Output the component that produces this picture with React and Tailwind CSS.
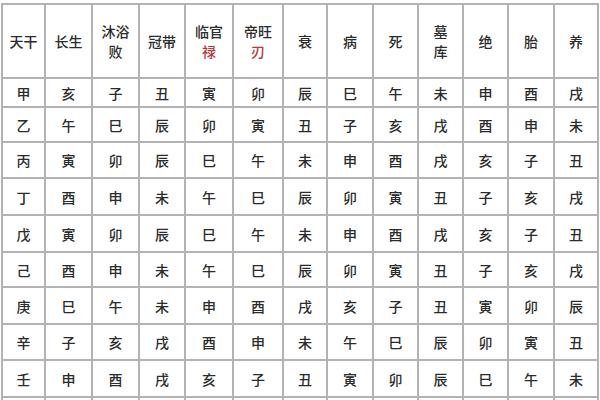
import React from 'react';

const header = [
  ['天干'],
  ['长生'],
  ['沐浴', '败'],
  ['冠带'],
  ['临官', '禄'],
  ['帝旺', '刃'],
  ['衰'],
  ['病'],
  ['死'],
  ['墓', '库'],
  ['绝'],
  ['胎'],
  ['养'],
];

const redSecond = { 4: true, 5: true };

const rows = [
  ['甲', '亥', '子', '丑', '寅', '卯', '辰', '巳', '午', '未', '申', '酉', '戌'],
  ['乙', '午', '巳', '辰', '卯', '寅', '丑', '子', '亥', '戌', '酉', '申', '未'],
  ['丙', '寅', '卯', '辰', '巳', '午', '未', '申', '酉', '戌', '亥', '子', '丑'],
  ['丁', '酉', '申', '未', '午', '巳', '辰', '卯', '寅', '丑', '子', '亥', '戌'],
  ['戊', '寅', '卯', '辰', '巳', '午', '未', '申', '酉', '戌', '亥', '子', '丑'],
  ['己', '酉', '申', '未', '午', '巳', '辰', '卯', '寅', '丑', '子', '亥', '戌'],
  ['庚', '巳', '午', '未', '申', '酉', '戌', '亥', '子', '丑', '寅', '卯', '辰'],
  ['辛', '子', '亥', '戌', '酉', '申', '未', '午', '巳', '辰', '卯', '寅', '丑'],
  ['壬', '申', '酉', '戌', '亥', '子', '丑', '寅', '卯', '辰', '巳', '午', '未'],
];

// row heights measured line to line
const rowHeights = ['h-[29px]', 'h-[35px]', 'h-[36px]', 'h-[37px]', 'h-[37px]', 'h-[35px]', 'h-[37px]', 'h-[36px]', 'h-[37px]'];

const colWidths = [43, 47, 47, 46, 48, 50, 44, 46, 45, 45, 45, 46, 44];

export default function App() {
  return (
    <div
      className="h-[400px] w-[600px] overflow-hidden bg-white pl-px pt-[3px]"
      style={{ fontFamily: '"Noto Sans CJK SC", "Noto Sans", sans-serif' }}
    >
      <table className="w-[598px] table-fixed border-collapse text-[14px] text-[#2b2b2b]">
        <colgroup>
          {colWidths.map((w, i) => (
            <col key={i} style={{ width: w }} />
          ))}
        </colgroup>
        <thead>
          <tr className="h-[74px]">
            {header.map((lines, i) => (
              <th key={i} className="border-2 border-[#b3b3b3] p-0 text-center align-middle font-medium leading-[20px]">
                {lines.map((t, j) => (
                  <div key={j} className={j === 1 && redSecond[i] ? 'text-[#b23a3a]' : ''}>
                    {t}
                  </div>
                ))}
              </th>
            ))}
          </tr>
        </thead>
        <tbody>
          {rows.map((r, ri) => (
            <tr key={ri} className={rowHeights[ri]}>
              {r.map((c, ci) => (
                <td key={ci} className="border-2 border-[#b3b3b3] p-0 text-center align-middle font-medium leading-none">
                  {c}
                </td>
              ))}
            </tr>
          ))}
          {/* next row is cut off by the frame: only the line stubs show */}
          <tr className="h-[10px]">
            {colWidths.map((_, ci) => (
              <td key={ci} className="border-2 border-b-0 border-[#b3b3b3] p-0" />
            ))}
          </tr>
        </tbody>
      </table>
    </div>
  );
}
